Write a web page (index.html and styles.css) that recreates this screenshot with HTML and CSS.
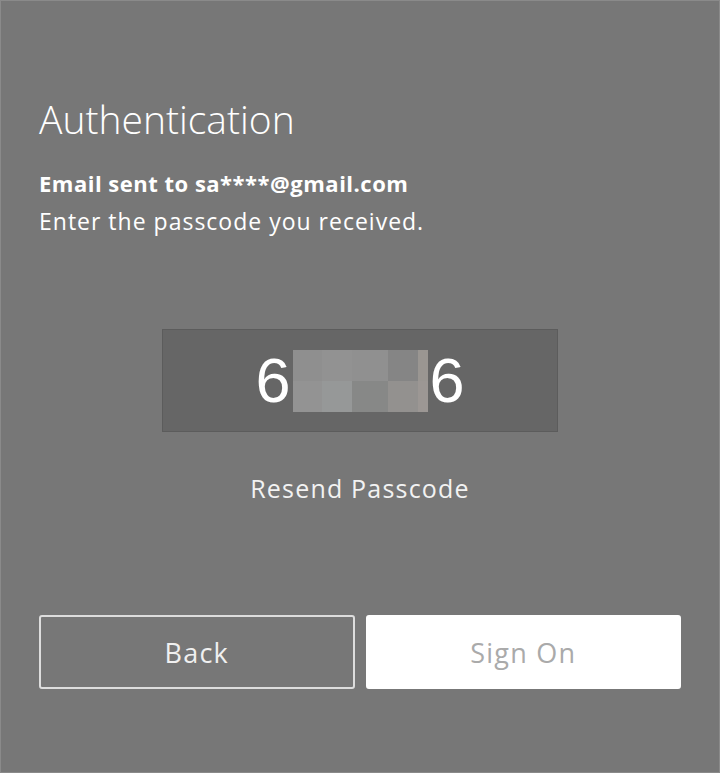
FILE: index.html
```html
<!DOCTYPE html>
<html>
<head>
<meta charset="utf-8">
<link rel="stylesheet" href="styles.css">
</head>
<body>
<div class="panel">
  <h1 class="title">Authentication</h1>
  <p class="sent">Email sent to sa****@gmail.com</p>
  <p class="hint">Enter the passcode you received.</p>
  <div class="code-wrap">
    <div class="code">
      <span class="digit">6</span>
      <div class="mask">
        <span class="c c1"></span><span class="c c2"></span><span class="c c3"></span><span class="c c4"></span><span class="c c5"></span>
        <span class="c c6"></span><span class="c c7"></span><span class="c c8"></span><span class="c c9"></span><span class="c c10"></span>
      </div>
      <span class="digit">6</span>
    </div>
  </div>
  <a class="resend">Resend Passcode</a>
  <div class="actions">
    <button class="btn btn-back">Back</button>
    <button class="btn btn-sign">Sign On</button>
  </div>
</div>
</body>
</html>
```
FILE: styles.css
```css
html, body {
  margin: 0;
  padding: 0;
  height: 100%;
}
body {
  background: #777;
  font-family: "Open Sans", "Liberation Sans", sans-serif;
  color: #fff;
}
.panel {
  box-sizing: border-box;
  height: 773px;
  border: 1px solid #8a8a8a;
  padding: 93px 38px 0 38px;
  display: flex;
  flex-direction: column;
}
.title {
  margin: 0;
  font-size: 39px;
  font-weight: 300;
  line-height: 50px;
  color: #fff;
}
.sent {
  margin: 25px 0 0;
  font-size: 22px;
  font-weight: 700;
  letter-spacing: 0.5px;
  line-height: 28px;
}
.hint {
  margin: 10px 0 0;
  font-size: 23px;
  font-weight: 400;
  letter-spacing: 1px;
  line-height: 28px;
}
.code-wrap {
  display: flex;
  justify-content: center;
  margin-top: 94px;
}
.code {
  width: 396px;
  height: 103px;
  box-sizing: border-box;
  background: #666;
  border: 1px solid #5c5c5c;
  display: flex;
  align-items: center;
  justify-content: center;
}
.digit {
  font-family: "Liberation Sans", sans-serif;
  font-size: 63px;
  line-height: 1;
  color: #fff;
}
.mask {
  width: 135px;
  height: 62px;
  margin: 0 2px;
  display: grid;
  grid-template-columns: 29px 30px 36px 30px 10px;
  grid-template-rows: 31px 31px;
}
.c1 { background: #8f8f8f; }
.c2 { background: #929292; }
.c3 { background: #909090; }
.c4 { background: #858585; }
.c5 { background: #9a9692; }
.c6 { background: #939393; }
.c7 { background: #969898; }
.c8 { background: #878887; }
.c9 { background: #93918f; }
.c10 { background: #9c9794; }
.resend {
  align-self: center;
  margin-top: 41px;
  font-size: 25px;
  letter-spacing: 1.2px;
  line-height: 30px;
  color: #f2f2f2;
}
.actions {
  display: flex;
  gap: 11px;
  margin-top: 112px;
}
.btn {
  flex: 1;
  height: 74px;
  border-radius: 3px;
  font-family: "Open Sans", "Liberation Sans", sans-serif;
  font-size: 27px;
  letter-spacing: 1.2px;
  cursor: pointer;
}
.btn-back {
  background: transparent;
  border: 2px solid #ddd;
  color: #f0f0f0;
}
.btn-sign {
  background: #fff;
  border: 2px solid #fff;
  color: #aaa;
}
```
